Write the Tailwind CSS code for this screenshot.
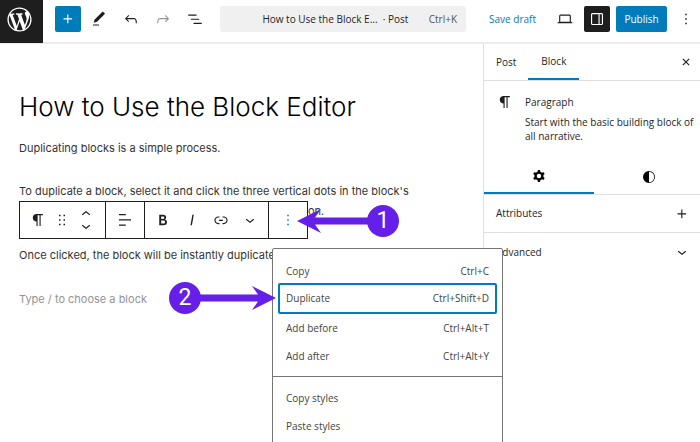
<!DOCTYPE html>
<html lang="en">

<head>
    <meta charset="UTF-8">
    <meta name="viewport" content="width=device-width, initial-scale=1.0">
    <title>How to Use the Block Editor</title>
    <script src="https://cdn.jsdelivr.net/npm/@tailwindcss/browser@4"></script>
</head>

<body class="bg-white">
    <div class="relative flex flex-col h-screen overflow-hidden font-['Open_Sans','Noto_Sans',sans-serif] text-[10px] text-[#1e1e1e]">
        <!-- Top bar -->
        <header class="flex items-start shrink-0 h-11 border-b-2 border-[#ececec]">
            <a href="#" aria-label="View posts" class="flex items-center justify-center w-[43px] h-[43px] pr-1 pb-1 bg-[#1e1e1e] text-white shrink-0">
                <svg class="w-[29px] h-[29px]" viewBox="-2 -2 24 24" fill="currentColor">
                    <path d="M20 10c0-5.51-4.49-10-10-10C4.48 0 0 4.49 0 10c0 5.52 4.48 10 10 10 5.51 0 10-4.48 10-10zM7.78 15.37L4.37 6.22c.55-.02 1.17-.08 1.17-.08.5-.06.44-1.13-.06-1.11 0 0-1.45.11-2.37.11-.18 0-.37 0-.58-.01C4.12 2.69 6.87 1.11 10 1.11c2.33 0 4.45.87 6.05 2.34-.68-.11-1.65.39-1.65 1.58 0 .74.45 1.36.9 2.1.35.61.55 1.36.55 2.46 0 1.49-1.4 5-1.4 5l-3.03-8.37c.54-.02.82-.17.82-.17.5-.05.44-1.25-.06-1.22 0 0-1.44.12-2.38.12-.87 0-2.33-.12-2.33-.12-.5-.03-.56 1.2-.06 1.22l.92.08 1.26 3.41zM17.41 10c.24-.64.74-1.87.43-4.25.7 1.29 1.05 2.71 1.05 4.25 0 3.29-1.73 6.24-4.4 7.78.97-2.59 1.94-5.2 2.92-7.78zM6.1 18.09C3.12 16.65 1.11 13.53 1.11 10c0-1.3.23-2.48.72-3.59C3.25 10.3 4.67 14.2 6.1 18.09zm4.03-6.63l2.58 6.98c-.86.29-1.76.45-2.71.45-.79 0-1.57-.11-2.29-.33.81-2.38 1.62-4.74 2.42-7.1z" />
                </svg>
            </a>
            <div class="flex flex-1 items-center pt-[6px] pl-3">
                <button aria-label="Add block" class="flex items-center justify-center w-[26px] h-[26px] rounded-[2px] bg-[#007cba] text-white">
                    <svg class="w-[18px] h-[18px]" viewBox="0 0 24 24" fill="currentColor"><path d="M11 12.5V17.5H12.5V12.5H17.5V11H12.5V6H11V11H6V12.5H11Z" /></svg>
                </button>
                <div class="flex gap-[6px] ml-[5px]">
                    <button aria-label="Tools" class="flex items-center justify-center w-[26px] h-[26px]">
                        <svg class="w-[18px] h-[18px]" viewBox="0 0 24 24" fill="currentColor"><path d="M20.100 5.100 16.900 2 6.200 12.700l-1.300 4.400 4.500-1.300L20.100 5.100zM4 20.800h8v-1.500H4v1.500z" /></svg>
                    </button>
                    <button aria-label="Undo" class="flex items-center justify-center w-[26px] h-[26px]">
                        <svg class="w-[18px] h-[18px]" viewBox="0 0 24 24" fill="currentColor"><path d="M18.300 11.700c-.6-.6-1.400-.9-2.300-.9H6.700l2.900-3.300-1.100-1-4.500 5L8.500 16l1-1-2.700-2.700H16c.5 0 .9.2 1.300.5 1 1 1 3.400 1 4.500v.3h1.500v-.2c0-1.500 0-4.300-1.500-5.700z" /></svg>
                    </button>
                    <button aria-label="Redo" class="flex items-center justify-center w-[26px] h-[26px] text-[#949494]">
                        <svg class="w-[18px] h-[18px]" viewBox="0 0 24 24" fill="currentColor"><path d="M15.600 6.500l-1.100 1 2.900 3.300H8c-.9 0-1.700.3-2.300.9-1.400 1.500-1.400 4.200-1.400 5.600v.2h1.500v-.3c0-1.100 0-3.500 1-4.500.3-.3.7-.5 1.300-.5h9.200L14.500 15l1.100 1.100 4.600-4.600-4.600-5z" /></svg>
                    </button>
                    <button aria-label="Document overview" class="flex items-center justify-center w-[26px] h-[26px]">
                        <svg class="w-[18px] h-[18px]" viewBox="0 0 24 24" fill="currentColor"><path d="M3 6h11v1.500H3V6Zm3.500 5.500h11V13h-11v-1.500ZM21 17H10v1.500h11V17Z" /></svg>
                    </button>
                </div>
                <button class="flex flex-1 items-center h-[26px] ml-3 pl-[38px] pr-[9px] rounded-[3px] bg-[#f0f0f0] whitespace-nowrap">
                    <span class="flex-1 text-center">How to Use the Block E... &nbsp;· Post</span>
                    <span class="ml-4 text-[#555]">Ctrl+K</span>
                </button>
                <button class="ml-[23px] text-[#007cba] whitespace-nowrap">Save draft</button>
                <div class="flex items-center gap-[6px] ml-4 pr-px">
                    <button aria-label="View" class="flex items-center justify-center w-[26px] h-[26px]">
                        <svg class="w-[18px] h-[18px]" viewBox="0 0 24 24" fill="currentColor"><path d="M20.500 16h-.7V8c0-1.100-.9-2-2-2H6.200c-1.100 0-2 .9-2 2v8h-.7c-.8 0-1.500.7-1.500 1.500h20c0-.8-.7-1.500-1.500-1.500zM5.700 8c0-.3.2-.5.5-.5h11.600c.3 0 .5.2.5.5v7.600H5.700V8z" /></svg>
                    </button>
                    <button aria-label="Settings" class="flex items-center justify-center w-[26px] h-[26px] rounded-[2px] bg-[#1e1e1e] text-white">
                        <svg class="w-[18px] h-[18px]" viewBox="0 0 24 24" fill="currentColor"><path d="M18 4H6c-1.100 0-2 .9-2 2v12c0 1.100.9 2 2 2h12c1.100 0 2-.9 2-2V6c0-1.100-.9-2-2-2zm-4 14.500H6c-.3 0-.5-.2-.5-.5V6c0-.3.2-.5.5-.5h8v13zm4.500-.5c0 .3-.2.5-.5.5h-2.500v-13H18c.3 0 .5.2.5.5v12z" /></svg>
                    </button>
                    <button class="w-[51px] h-[26px] rounded-[2px] bg-[#007cba] text-white">Publish</button>
                    <button aria-label="Options" class="flex items-center justify-center w-[26px] h-[26px]">
                        <svg class="w-[18px] h-[18px]" viewBox="0 0 24 24" fill="currentColor"><path d="M13 19h-2v-2h2v2zm0-6h-2v-2h2v2zm0-6h-2V5h2v2z" /></svg>
                    </button>
                </div>
            </div>
        </header>

        <div class="flex flex-1 min-h-0">
            <!-- Canvas -->
            <main class="flex-1 pl-[19px] pt-[45px] font-['Inter',sans-serif] text-[11px] leading-5 text-[#333] whitespace-nowrap">
                <h1 class="text-[26px] leading-9 font-light text-black">How to Use the Block Editor</h1>
                <p class="mt-[13px]">Duplicating blocks is a simple process.</p>
                <div class="relative mt-[23px]">
                    <p>To duplicate a block, select it and click the three vertical dots in the block's<br>
                        toolbar. From the menu there, choose the Duplicate option.</p>
                    <!-- Block toolbar -->
                    <div role="toolbar" class="absolute left-0 top-5 flex h-[38px] w-[289px] border border-[#1e1e1e] bg-white text-[#1e1e1e] divide-x divide-[#1e1e1e]">
                        <div class="flex items-center w-[86px] pl-[9px] gap-[6px]">
                            <button aria-label="Paragraph"><svg class="w-[18px] h-[18px]" viewBox="0 0 24 24" fill="currentColor"><path d="m10 14v6h1.500v-14.500h2.500v14.500h1.500v-14.500h3v-1.500h-8.500c-2.760 0-5 2.240-5 5s2.240 5 5 5z" /></svg></button>
                            <button aria-label="Drag"><svg class="w-[18px] h-[18px]" viewBox="0 0 24 24" fill="currentColor"><path d="M8 7h2V5H8v2zm0 6h2v-2H8v2zm0 6h2v-2H8v2zm6-14v2h2V5h-2zm0 8h2v-2h-2v2zm0 6h2v-2h-2v2z" /></svg></button>
                            <div class="flex flex-col">
                                <button aria-label="Move up" class="flex items-start h-[15px] overflow-hidden"><svg class="w-[18px] h-[18px] shrink-0" viewBox="0 0 24 24" fill="currentColor"><path d="M6.500 12.400L12 8l5.500 4.400-.9 1.200L12 10l-4.500 3.600-1-1.200z" /></svg></button>
                                <button aria-label="Move down" class="flex items-end h-[15px] overflow-hidden"><svg class="w-[18px] h-[18px] shrink-0" viewBox="0 0 24 24" fill="currentColor"><path d="M17.500 11.600L12 16l-5.500-4.400.9-1.200L12 14l4.500-3.600 1 1.200z" /></svg></button>
                            </div>
                        </div>
                        <div class="flex items-center justify-center w-[39px]">
                            <button aria-label="Align text"><svg class="w-[18px] h-[18px]" viewBox="0 0 24 24" fill="currentColor"><path d="M13 5.500H4V4h9v1.500Zm7 7H4V11h16v1.500Zm-7 7H4V18h9v1.500Z" /></svg></button>
                        </div>
                        <div class="flex items-center justify-center w-[124px] gap-[11px]">
                            <button aria-label="Bold"><svg class="w-[18px] h-[18px]" viewBox="0 0 24 24" fill="currentColor"><path d="M14.700 11.300c1-.6 1.500-1.600 1.500-3 0-2.300-1.300-3.400-4-3.400H7v14h5.800c1.400 0 2.500-.3 3.300-1 .8-.7 1.200-1.700 1.200-2.900.1-1.900-.8-3.100-2.600-3.700zm-5.100-4h2.300c.6 0 1.100.1 1.400.4.3.3.5.7.5 1.200s-.2 1-.5 1.200c-.3.3-.8.4-1.400.4H9.600V7.300zm4.600 9c-.4.3-1 .4-1.700.4H9.600v-3.900h2.900c.7 0 1.300.2 1.700.5.4.3.6.8.6 1.500s-.2 1.200-.6 1.500z" /></svg></button>
                            <button aria-label="Italic"><svg class="w-[18px] h-[18px]" viewBox="0 0 24 24" fill="currentColor"><path d="M12.500 5L10 19h1.900l2.500-14z" /></svg></button>
                            <button aria-label="Link"><svg class="w-[18px] h-[18px]" viewBox="0 0 24 24" fill="currentColor"><path d="M15.600 7.200H14v1.500h1.600c2 0 3.700 1.700 3.700 3.700s-1.700 3.700-3.700 3.700H14v1.500h1.600c2.800 0 5.200-2.300 5.200-5.200 0-2.900-2.300-5.200-5.200-5.200zM4.700 12.400c0-2 1.700-3.700 3.700-3.700H10V7.200H8.400c-2.900 0-5.200 2.300-5.200 5.200 0 2.900 2.300 5.200 5.200 5.200H10v-1.500H8.400c-2 0-3.700-1.700-3.700-3.700zm4.600.9h5.300v-1.500H9.300v1.500z" /></svg></button>
                            <button aria-label="More formatting"><svg class="w-[18px] h-[18px]" viewBox="0 0 24 24" fill="currentColor"><path d="M17.500 11.600L12 16l-5.500-4.400.9-1.200L12 14l4.500-3.600 1 1.200z" /></svg></button>
                        </div>
                        <div class="flex flex-1 items-center justify-center text-[#007cba]">
                            <button aria-label="Options"><svg class="w-[18px] h-[18px]" viewBox="0 0 24 24" fill="currentColor"><path d="M13 19h-2v-2h2v2zm0-6h-2v-2h2v2zm0-6h-2V5h2v2z" /></svg></button>
                        </div>
                    </div>
                </div>
                <p class="mt-6">Once clicked, the block will be instantly duplicated.</p>
                <p class="mt-6 text-[#949494]">Type / to choose a block</p>
            </main>

            <!-- Settings sidebar -->
            <aside class="w-[217px] shrink-0 overflow-hidden border-l border-[#e0e0e0] font-medium">
                <div class="flex items-stretch h-[37px] border-b border-[#e0e0e0]">
                    <button class="px-3">Post</button>
                    <button class="w-[51px] border-b-2 border-[#007cba]">Block</button>
                    <button aria-label="Close settings" class="ml-auto mr-[5px]">
                        <svg class="w-[18px] h-[18px]" viewBox="0 0 24 24" fill="currentColor"><path d="M12 13.060l3.712 3.713 1.061-1.060L13.061 12l3.712-3.712-1.060-1.060L12 10.938 8.288 7.227l-1.061 1.060L10.939 12l-3.712 3.712 1.060 1.061L12 13.061z" /></svg>
                    </button>
                </div>
                <div class="flex gap-[11px] pl-3 pt-3">
                    <svg class="w-[18px] h-[18px] shrink-0" viewBox="0 0 24 24" fill="currentColor"><path d="m10 14v6h1.500v-14.500h2.500v14.500h1.500v-14.500h3v-1.500h-8.500c-2.760 0-5 2.240-5 5s2.240 5 5 5z" /></svg>
                    <div>
                        <h2 class="leading-[18px]">Paragraph</h2>
                        <p class="mt-1 leading-[14px] font-normal">Start with the basic building block of all narrative.</p>
                    </div>
                </div>
                <div class="flex h-9 mt-4 border-b border-[#e0e0e0]">
                    <button aria-label="Settings" class="flex shrink-0 items-center justify-center w-[110px] border-b-2 border-[#007cba] text-black">
                        <svg class="w-[18px] h-[18px]" viewBox="0 0 24 24" fill="currentColor" fill-rule="evenodd"><path d="M10.289 4.836A1 1 0 0111.275 4h1.306a1 1 0 01.987.836l.244 1.466c.787.26 1.503.679 2.108 1.218l1.393-.522a1 1 0 011.216.437l.653 1.130a1 1 0 01-.23 1.273l-1.148.944a6.025 6.025 0 010 2.435l1.149.946a1 1 0 01.23 1.272l-.653 1.130a1 1 0 01-1.216.437l-1.394-.522c-.605.54-1.320.958-2.108 1.218l-.244 1.466a1 1 0 01-.987.836h-1.306a1 1 0 01-.986-.836l-.244-1.466a5.995 5.995 0 01-2.108-1.218l-1.394.522a1 1 0 01-1.217-.436l-.653-1.131a1 1 0 01.23-1.272l1.149-.946a6.026 6.026 0 010-2.435l-1.148-.944a1 1 0 01-.23-1.272l.653-1.131a1 1 0 011.217-.437l1.393.522a5.994 5.994 0 012.108-1.218l.244-1.466zM14.929 12a3 3 0 11-6 0 3 3 0 016 0z" /></svg>
                    </button>
                    <button aria-label="Styles" class="flex shrink-0 items-center justify-center w-[110px] text-black">
                        <svg class="w-[18px] h-[18px]" viewBox="0 0 24 24" fill="currentColor"><path d="M12 4a8 8 0 1 0 0 16 8 8 0 0 0 0-16zm0 15V5a7 7 0 0 1 0 14z" /></svg>
                    </button>
                </div>
                <button class="flex items-center justify-between w-full h-[38px] pl-3 pr-[9px] border-b border-[#e0e0e0]">
                    <span>Attributes</span>
                    <svg class="w-[18px] h-[18px]" viewBox="0 0 24 24" fill="currentColor"><path d="M11 12.500V17.500H12.500V12.500H17.500V11H12.500V6H11V11H6V12.500H11Z" /></svg>
                </button>
                <button class="flex items-center justify-between w-full h-[38px] pl-3 pr-[9px]">
                    <span>Advanced</span>
                    <svg class="w-[18px] h-[18px]" viewBox="0 0 24 24" fill="currentColor"><path d="M17.500 11.600L12 16l-5.500-4.400.9-1.200L12 14l4.500-3.600 1 1.200z" /></svg>
                </button>
            </aside>
        </div>

        <!-- Block options menu -->
        <div role="menu" class="absolute left-[272px] top-[248px] w-[231px] rounded-[2px] border border-[#757575] bg-white text-[#444]">
            <div class="px-[5px] pt-[6px] pb-[6px]">
                <button role="menuitem" class="flex items-center justify-between w-full h-7 pt-1 px-2"><span>Copy</span><span>Ctrl+C</span></button>
                <button role="menuitem" class="flex items-center justify-between w-full h-[31px] px-[6px] border-2 border-[#007cba] rounded-[2px]"><span>Duplicate</span><span>Ctrl+Shift+D</span></button>
                <button role="menuitem" class="flex items-center justify-between w-full h-7 px-2"><span>Add before</span><span>Ctrl+Alt+T</span></button>
                <button role="menuitem" class="flex items-center justify-between w-full h-7 px-2"><span>Add after</span><span>Ctrl+Alt+Y</span></button>
            </div>
            <div class="px-[5px] py-[7px] border-t border-[#757575]">
                <button role="menuitem" class="flex items-center w-full h-7 px-2">Copy styles</button>
                <button role="menuitem" class="flex items-center w-full h-7 px-2">Paste styles</button>
            </div>
        </div>

        <!-- Step markers -->
        <div class="absolute left-[297px] top-[205px] flex items-center">
            <svg class="w-[71px] h-6" viewBox="0 0 71 24" fill="#651fe8"><path d="M0 12 24 0 18 8.500H71V15.500H18L24 24Z" /></svg>
            <span class="flex items-center justify-center w-8 h-8 -ml-px rounded-full bg-[#651fe8] font-['Roboto',sans-serif] text-[23px] text-white">1</span>
        </div>
        <div class="absolute left-[169px] top-[282px] flex items-center">
            <span class="flex items-center justify-center w-8 h-8 rounded-full bg-[#651fe8] font-['Roboto',sans-serif] text-[23px] text-white">2</span>
            <svg class="w-[76px] h-6 -ml-px" viewBox="0 0 76 24" fill="#651fe8"><path d="M76 12 52 0 58 8.500H0V15.500H58L52 24Z" /></svg>
        </div>
    </div>
</body>

</html>
